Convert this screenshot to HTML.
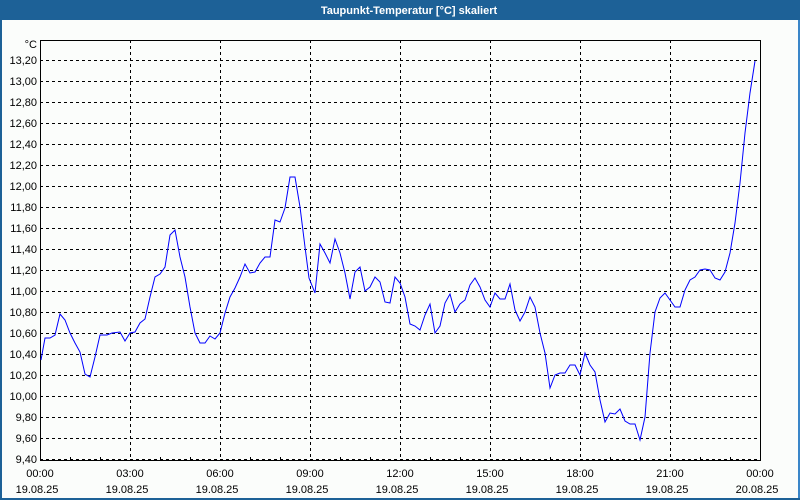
<!DOCTYPE html>
<html><head><meta charset="utf-8"><style>
html,body{margin:0;padding:0;width:800px;height:500px;overflow:hidden;background:#fbfdfb}
svg{display:block}
text{font-family:"Liberation Sans",sans-serif;font-size:11px;fill:#000}
</style></head><body>
<svg width="800" height="500" viewBox="0 0 800 500" xmlns="http://www.w3.org/2000/svg">
<rect x="0" y="0" width="800" height="500" fill="#fbfdfb"/>
<rect x="0" y="0" width="800" height="20" fill="#1d6197"/>
<rect x="0" y="20" width="2" height="480" fill="#1d6197"/>
<rect x="798" y="20" width="2" height="480" fill="#3a86c8"/>
<rect x="0" y="498" width="800" height="2" fill="#1d6197"/>
<text x="409" y="14" text-anchor="middle" style="fill:#fff;font-weight:bold;font-size:11px">Taupunkt-Temperatur [°C] skaliert</text>
<g stroke="#000" stroke-width="1" stroke-dasharray="3,3" shape-rendering="crispEdges" fill="none">
<path d="M40 60.5H760M40 81.5H760M40 102.5H760M40 123.5H760M40 144.5H760M40 165.5H760M40 186.5H760M40 207.5H760M40 228.5H760M40 249.5H760M40 270.5H760M40 291.5H760M40 312.5H760M40 333.5H760M40 354.5H760M40 375.5H760M40 396.5H760M40 417.5H760M40 438.5H760M40 459.5H760"/>
<path d="M130.5 40V460M220.5 40V460M310.5 40V460M400.5 40V460M490.5 40V460M580.5 40V460M670.5 40V460"/>
</g>
<g stroke="#000" stroke-width="1" shape-rendering="crispEdges" fill="none">
<rect x="40.5" y="40.5" width="720" height="420"/>
<path d="M70.5 460V457M100.5 460V457M160.5 460V457M190.5 460V457M250.5 460V457M280.5 460V457M340.5 460V457M370.5 460V457M430.5 460V457M460.5 460V457M520.5 460V457M550.5 460V457M610.5 460V457M640.5 460V457M700.5 460V457M730.5 460V457"/>
</g>
<polyline fill="none" stroke="#0000ff" stroke-width="1" points="41,360 45,338 50,338 55,335 60,314 65,320 70,333 75,343 80,352 85,374 90,377 95,357 100,335 107,335 112,333 120,332 125,341 130,333 135,332 140,323 145,319 150,297 155,277 160,274 165,267 170,235 175,230 180,257 185,277 190,307 195,333 200,343 205,343 210,336 215,339 220,333 225,313 230,297 235,288 240,277 245,264 250,273 255,272 260,263 265,257 270,257 275,220 280,222 285,208 290,177 295,177 300,207 305,247 309,278 315,293 320,244 325,253 330,263 335,239 340,253 345,273 350,299 355,272 360,267 365,291 370,287 375,277 380,282 385,302 390,303 395,277 400,283 405,297 410,324 415,326 420,330 425,315 430,304 435,333 440,326 445,303 450,294 455,312 460,304 465,300 470,285 475,278 480,287 485,300 490,307 495,293 500,299 505,299 510,284 515,310 520,321 525,312 530,297 535,307 540,333 545,353 550,388 555,375 560,373 565,373 570,365 575,365 580,375 585,353 590,365 595,372 600,400 605,422 610,413 615,414 620,409 625,421 630,424 635,424 640,440 645,417 650,353 655,312 660,298 665,293 670,300 675,307 680,307 685,290 690,280 695,277 700,270 705,269 710,270 715,278 720,280 725,272 730,253 735,223 740,183 745,133 750,93 755,61"/>
<g text-anchor="end">
<text x="37" y="48">°C</text>
<text x="37" y="64">13,20</text><text x="37" y="85">13,00</text><text x="37" y="106">12,80</text><text x="37" y="127">12,60</text><text x="37" y="148">12,40</text><text x="37" y="169">12,20</text><text x="37" y="190">12,00</text><text x="37" y="211">11,80</text><text x="37" y="232">11,60</text><text x="37" y="253">11,40</text><text x="37" y="274">11,20</text><text x="37" y="295">11,00</text><text x="37" y="316">10,80</text><text x="37" y="337">10,60</text><text x="37" y="358">10,40</text><text x="37" y="379">10,20</text><text x="37" y="400">10,00</text><text x="37" y="421">9,80</text><text x="37" y="442">9,60</text><text x="37" y="463">9,40</text>
</g>
<g text-anchor="middle">
<text x="40" y="477">00:00</text><text x="130" y="477">03:00</text><text x="220" y="477">06:00</text><text x="310" y="477">09:00</text><text x="400" y="477">12:00</text><text x="490" y="477">15:00</text><text x="580" y="477">18:00</text><text x="670" y="477">21:00</text><text x="760" y="477">00:00</text>
<text x="37" y="493">19.08.25</text><text x="127" y="493">19.08.25</text><text x="217" y="493">19.08.25</text><text x="307" y="493">19.08.25</text><text x="397" y="493">19.08.25</text><text x="487" y="493">19.08.25</text><text x="577" y="493">19.08.25</text><text x="667" y="493">19.08.25</text><text x="757" y="493">20.08.25</text>
</g>
</svg>
</body></html>
